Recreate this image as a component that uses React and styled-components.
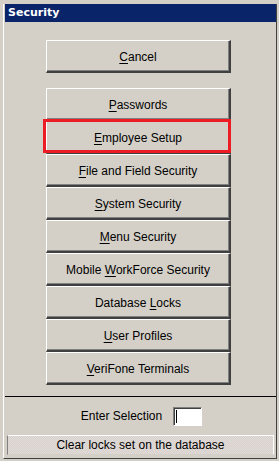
import React from "react";
import styled, { createGlobalStyle } from "styled-components";

const GlobalStyle = createGlobalStyle`
  html, body {
    margin: 0;
    padding: 0;
    background: #d4d0c8;
  }
  body {
    font-family: Tahoma, "DejaVu Sans", "Liberation Sans", sans-serif;
  }
`;

const Screen = styled.div`
  width: 279px;
  height: 461px;
  box-sizing: border-box;
  background: #d4d0c8;
  padding: 4px 2px 2px 3px;
`;

const Frame = styled.div`
  height: 100%;
  box-sizing: border-box;
  display: flex;
  flex-direction: column;
  border-left: 1px solid #ffffff;
  border-right: 1px solid #404040;
  border-bottom: 1px solid #404040;
  padding: 0 0 0 1px;
`;

const TitleBar = styled.div`
  height: 18px;
  background: #0a246a;
  color: #ffffff;
  font-family: "DejaVu Sans", sans-serif;
  font-weight: bold;
  font-size: 11px;
  line-height: 18px;
  padding-left: 3px;
`;

const Body = styled.div`
  flex: 1;
  display: flex;
  flex-direction: column;
`;

const ButtonColumn = styled.div`
  display: flex;
  flex-direction: column;
  width: 185px;
  margin-left: 41px;
  padding-top: 18px;
`;

const Button = styled.div`
  position: relative;
  height: 33px;
  box-sizing: border-box;
  display: flex;
  align-items: center;
  justify-content: center;
  margin-bottom: ${(p) => p.gap || 0}px;
  background: #d4d0c8;
  border-top: 1px solid #ffffff;
  border-left: 1px solid #ffffff;
  border-right: 2px solid #404040;
  border-bottom: 2px solid #404040;
  box-shadow: inset -1px -1px 0 #808080;
  font-family: "Liberation Sans", Arial, sans-serif;
  font-size: 12px;
  color: #000;
  padding-top: 1px;
`;

const Highlight = styled.div`
  position: absolute;
  top: -3px;
  left: -4px;
  right: -2px;
  bottom: -1px;
  border: 3px solid #ed1c24;
  pointer-events: none;
`;

const Key = styled.span`
  text-decoration: underline;
  text-underline-offset: 2px;
`;

const Divider = styled.div`
  margin-top: 11px;
  height: 1px;
  background: #000;
`;

const SelectionRow = styled.div`
  display: flex;
  align-items: center;
  justify-content: center;
  gap: 11px;
  height: 38px;
  padding-left: 2px;
  font-family: "Liberation Sans", Arial, sans-serif;
  font-size: 12px;
`;

const SelectionInput = styled.div`
  width: 29px;
  height: 19px;
  box-sizing: border-box;
  background: #fff;
  border-top: 1px solid #808080;
  border-left: 1px solid #808080;
  border-right: 1px solid #ffffff;
  border-bottom: 1px solid #ffffff;
  box-shadow: inset 1px 1px 0 #404040;
  display: flex;
  align-items: center;
  padding-left: 2px;
`;

const Caret = styled.span`
  width: 1px;
  height: 13px;
  background: #000;
`;

const StatusBar = styled.div`
  margin: 0 2px 0 2px;
  height: 20px;
  box-sizing: border-box;
  border-top: 1px solid #ffffff;
  border-right: 1px solid #ffffff;
  border-left: 1px solid #808080;
  border-bottom: 1px solid #d4d0c8;
  background-color: #ddd6d3;
  background-image: repeating-conic-gradient(#d8d0cd 0 25%, #e2dcd9 0 50%);
  background-size: 2px 2px;
  display: flex;
  align-items: center;
  justify-content: center;
  font-family: "Liberation Sans", Arial, sans-serif;
  font-size: 12px;
  color: #000;
`;

const items = [
  { key: "P", rest: "asswords" },
  { key: "E", rest: "mployee Setup", highlight: true },
  { key: "F", rest: "ile and Field Security" },
  { key: "S", rest: "ystem Security" },
  { key: "M", rest: "enu Security" },
  { pre: "Mobile ", key: "W", rest: "orkForce Security" },
  { pre: "Database ", key: "L", rest: "ocks" },
  { key: "U", rest: "ser Profiles" },
  { key: "V", rest: "eriFone Terminals" },
];

export default function App() {
  return (
    <>
      <GlobalStyle />
      <Screen>
        <Frame>
          <TitleBar>Security</TitleBar>
          <Body>
            <ButtonColumn>
              <Button gap={15}>
                <span>
                  <Key>C</Key>ancel
                </span>
              </Button>
              {items.map((it) => (
                <Button key={it.key}>
                  <span>
                    {it.pre}
                    <Key>{it.key}</Key>
                    {it.rest}
                  </span>
                  {it.highlight && <Highlight />}
                </Button>
              ))}
            </ButtonColumn>
            <Divider />
            <SelectionRow>
              <span>Enter Selection</span>
              <SelectionInput>
                <Caret />
              </SelectionInput>
            </SelectionRow>
            <StatusBar>Clear locks set on the database</StatusBar>
          </Body>
        </Frame>
      </Screen>
    </>
  );
}
